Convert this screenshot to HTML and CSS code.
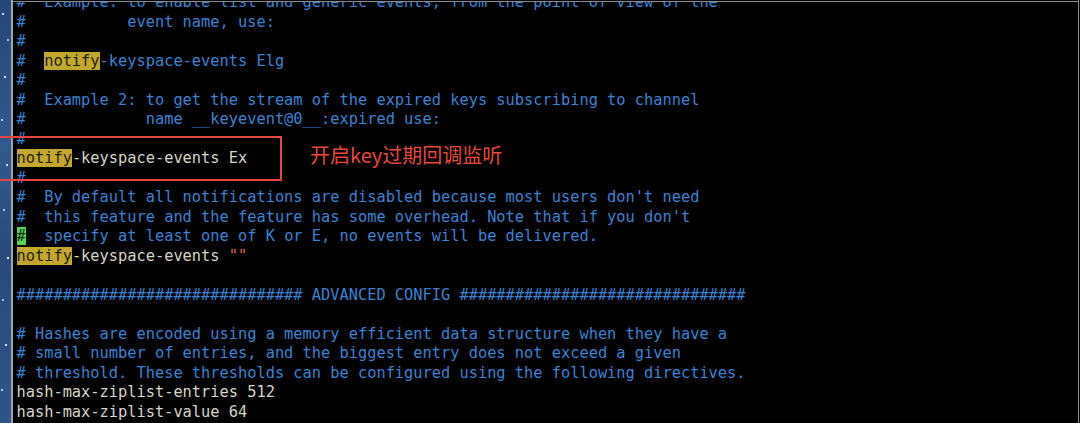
FILE: index.html
```html
<!DOCTYPE html>
<html lang="zh-CN">
<head>
<meta charset="utf-8">
<title>redis.conf</title>
<link rel="stylesheet" href="styles.css">
</head>
<body>
<div class="screen">
  <div class="strip"></div>
  <div class="divider"></div>
  <div class="term">
    <div class="lines">
<div class="ln c">#  Example: to enable list and generic events, from the point of view of the</div>
<div class="ln c">#           event name, use:</div>
<div class="ln c">#</div>
<div class="ln c">#  <span class="hl">notify</span>-keyspace-events Elg</div>
<div class="ln c">#</div>
<div class="ln c">#  Example 2: to get the stream of the expired keys subscribing to channel</div>
<div class="ln c">#             name __keyevent@0__:expired use:</div>
<div class="ln c">#</div>
<div class="ln p"><span class="hl">notify</span>-keyspace-events Ex</div>
<div class="ln c">#</div>
<div class="ln c">#  By default all notifications are disabled because most users don't need</div>
<div class="ln c">#  this feature and the feature has some overhead. Note that if you don't</div>
<div class="ln c"><span class="cur">#</span>  specify at least one of K or E, no events will be delivered.</div>
<div class="ln p"><span class="hl">notify</span>-keyspace-events <span class="str">""</span></div>
<div class="ln"> </div>
<div class="ln c">############################### ADVANCED CONFIG ###############################</div>
<div class="ln"> </div>
<div class="ln c"># Hashes are encoded using a memory efficient data structure when they have a</div>
<div class="ln c"># small number of entries, and the biggest entry does not exceed a given</div>
<div class="ln c"># threshold. These thresholds can be configured using the following directives.</div>
<div class="ln p">hash-max-ziplist-entries 512</div>
<div class="ln p">hash-max-ziplist-value 64</div>
    </div>
  </div>
  <div class="edge"></div>
  <div class="mark"></div>
  <div class="note">开启key过期回调监听</div>
</div>
</body>
</html>
```
FILE: styles.css
```css
* { box-sizing: border-box; }
html, body {
  margin: 0;
  padding: 0;
  background: #000;
  width: 1080px;
  height: 423px;
  overflow: hidden;
}
.screen {
  position: relative;
  display: flex;
  width: 1080px;
  height: 423px;
  background: #000;
}
.strip {
  width: 11px;
  flex: none;
  background-color: #2b4c7e;
  background-image:
    radial-gradient(circle at 3px 14px, #cfe0ff 0 1px, transparent 1.5px),
    radial-gradient(circle at 8px 40px, #9fc0f0 0 1px, transparent 1.5px),
    radial-gradient(circle at 5px 77px, #e0ecff 0 1px, transparent 1.5px),
    radial-gradient(circle at 2px 120px, #a9c6f2 0 1px, transparent 1.5px),
    radial-gradient(circle at 7px 165px, #d6e6ff 0 1px, transparent 1.5px),
    radial-gradient(circle at 4px 210px, #b5cdf5 0 1px, transparent 1.5px),
    radial-gradient(circle at 8px 258px, #e8f0ff 0 1px, transparent 1.5px),
    radial-gradient(circle at 3px 300px, #a8c4ef 0 1px, transparent 1.5px),
    radial-gradient(circle at 6px 345px, #d9e7ff 0 1px, transparent 1.5px),
    radial-gradient(circle at 2px 390px, #b9d0f5 0 1px, transparent 1.5px),
    linear-gradient(180deg, #27467a 0%, #34598f 35%, #2a4a7c 60%, #30548a 100%);
}
.divider {
  width: 2px;
  flex: none;
  background: #a4a4a4;
}
.term {
  flex: 1;
  overflow: hidden;
  margin-top: 1px;
  border-top: 1px solid #8c8c8c;
  padding-left: 3.5px;
}
.lines {
  margin-top: -9px;
  font-family: "DejaVu Sans Mono", "Liberation Mono", monospace;
  font-size: 15.33px;
  line-height: 19.5px;
  color: #d6d6c6;
}
.ln {
  height: 19.5px;
  white-space: pre;
}
.c { color: #3d82d4; }
.p { color: #d6d6c6; }
.hl {
  background: #c4a82e;
  color: #1e1e14;
}
.cur {
  background: #52d852;
  color: #103010;
}
.str { color: #e06262; }
.edge {
  width: 1px;
  flex: none;
  background: #8a8a8a;
  margin-right: 1px;
}
.mark {
  position: absolute;
  left: -4px;
  top: 136px;
  width: 286px;
  height: 45px;
  border: 2px solid #e3463c;
}
.note {
  position: absolute;
  left: 310px;
  top: 144px;
  font-family: "Noto Sans CJK SC", "Noto Sans", sans-serif;
  font-size: 20px;
  line-height: 22px;
  color: #e8473c;
  white-space: nowrap;
}
```
